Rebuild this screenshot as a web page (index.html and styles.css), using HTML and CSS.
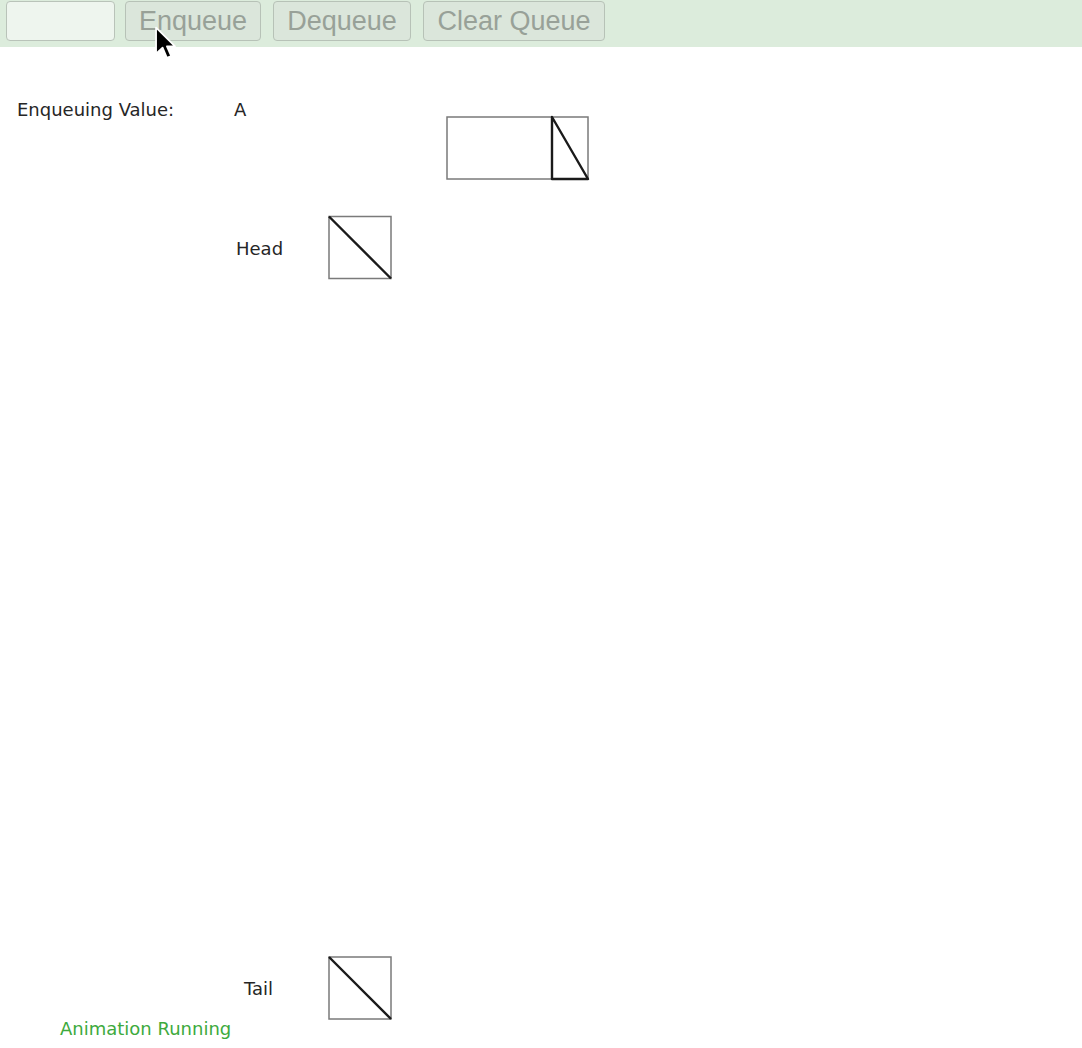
FILE: index.html
```html
<!DOCTYPE html>
<html>
<head>
<meta charset="utf-8">
<link rel="stylesheet" href="styles.css">
</head>
<body>
<div class="toolbar">
  <input class="field" type="text" disabled>
  <button class="btn b-enq" disabled>Enqueue</button>
  <button class="btn b-deq" disabled>Dequeue</button>
  <button class="btn b-clr" disabled>Clear Queue</button>
</div>
<svg class="canvas" width="1082" height="1001" viewBox="0 47 1082 1001">
  <text class="lbl" x="17" y="116">Enqueuing Value:</text>
  <text class="lbl" x="234" y="116">A</text>
  <rect class="box" x="447" y="117" width="141" height="62"/>
  <line class="box" x1="552" y1="117" x2="552" y2="179"/>
  <path class="ptr" d="M552 117 L588 179 L552 179 Z"/>
  <text class="lbl" x="236" y="255">Head</text>
  <rect class="box" x="329" y="216.5" width="62" height="62"/>
  <line class="ptr" x1="329" y1="216.5" x2="391" y2="278.5"/>
  <text class="lbl" x="244" y="995">Tail</text>
  <rect class="box" x="329" y="957" width="62" height="62"/>
  <line class="ptr" x1="329" y1="957" x2="391" y2="1019"/>
  <text class="lbl status" x="60" y="1035">Animation Running</text>
</svg>
<svg class="cursor" width="26" height="40" viewBox="0 0 24 36">
  <path d="M1 1 L1 25 L7 19.5 L11 29 L15 27.3 L11 18.3 L18.5 18.3 Z" fill="#000" stroke="#fff" stroke-width="1.6" stroke-linejoin="round"/>
</svg>
</body>
</html>
```
FILE: styles.css
```css
html, body {
  margin: 0;
  padding: 0;
  background: #ffffff;
}
body {
  position: relative;
  width: 1082px;
  height: 1048px;
  overflow: hidden;
  font-family: "Liberation Sans", Arial, sans-serif;
}
.toolbar {
  display: flex;
  align-items: flex-start;
  height: 47px;
  box-sizing: border-box;
  padding: 1px 0 0 6px;
  background: #dcecdc;
}
.field {
  width: 109px;
  height: 40px;
  box-sizing: border-box;
  border: 1px solid #b9c3b9;
  border-radius: 4px;
  background: #eef5ee;
  margin: 0 10px 0 0;
  padding: 0;
}
.btn {
  height: 40px;
  box-sizing: border-box;
  border: 1px solid #b7c2b7;
  border-radius: 4px;
  background: #dbe6db;
  color: #98a198;
  font-family: "Liberation Sans", Arial, sans-serif;
  font-size: 27px;
  padding: 0;
  margin: 0 12px 0 0;
  line-height: 38px;
}
.b-enq { width: 136px; }
.b-deq { width: 138px; }
.b-clr { width: 182px; }
.canvas {
  display: block;
}
.lbl {
  font-family: "DejaVu Sans", sans-serif;
  font-size: 18px;
  fill: #262626;
}
.status {
  fill: #3daa3d;
}
.box {
  fill: none;
  stroke: #7a7a7a;
  stroke-width: 1.5;
}
.ptr {
  fill: none;
  stroke: #1a1a1a;
  stroke-width: 2.4;
  stroke-linejoin: round;
}
.cursor {
  position: absolute;
  left: 155px;
  top: 26px;
}
```
